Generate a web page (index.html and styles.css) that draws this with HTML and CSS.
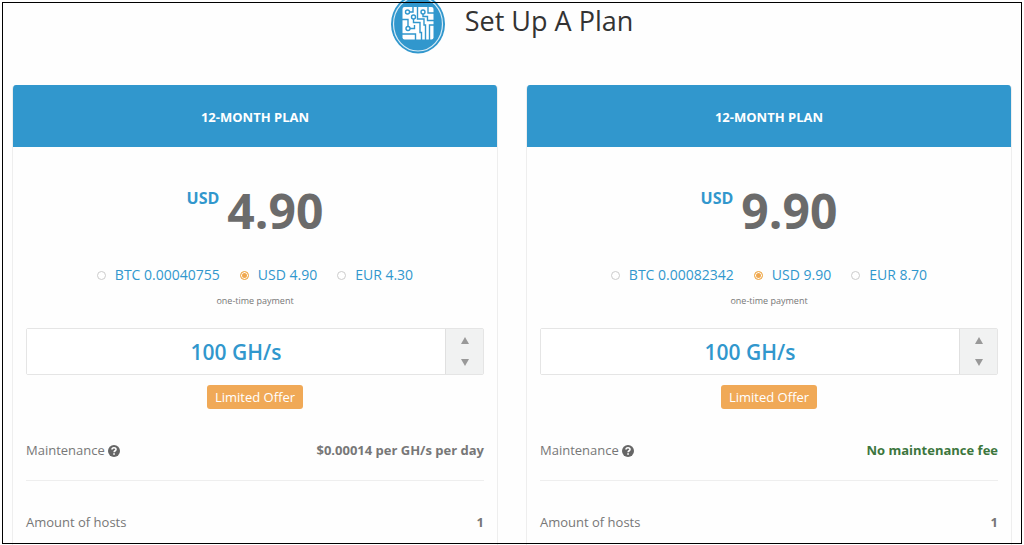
FILE: index.html
```html
<!DOCTYPE html>
<html lang="en">
<head>
  <meta charset="utf-8">
  <meta name="viewport" content="width=device-width, initial-scale=1">
  <title>Set Up A Plan</title>
  <link rel="stylesheet" href="styles.css">
</head>
<body>
  <header class="page-header">
    <svg class="logo" viewBox="0 0 54 54" aria-hidden="true">
      <ellipse cx="27" cy="24" rx="27" ry="29.500" fill="#3197cd"/>
      <ellipse cx="27" cy="24" rx="24.500" ry="27" fill="none" stroke="#d6ebf6" stroke-width="1.2"/>
      <rect x="11.500" y="7" width="31" height="32.500" rx="2" fill="#fff"/>
      <g fill="none" stroke="#3197cd" stroke-width="1.400">
        <circle cx="16.500" cy="12" r="2"/>
        <circle cx="22.500" cy="17" r="2"/>
        <circle cx="32" cy="12" r="2"/>
        <circle cx="17" cy="28.500" r="2"/>
        <path d="M18.500 12H22V7M17 26.500V19.500H11M22.500 19V22.500H29V32.500H30.500V40M19 28.500H23.500V25M11 34H24.500V40M26.500 7V19H33V25H34.500V40M32 14V16.500H36.500V20.500H43M37 7V13H43M38.500 40V25H43"/>
      </g>
    </svg>
    <h1>Set Up A Plan</h1>
  </header>

  <main class="plans">
    <form class="plan">
      <h2 class="plan-title">12-MONTH PLAN</h2>
      <div class="plan-body">
        <div class="price"><span class="currency">USD</span><span class="amount">4.90</span></div>
        <div class="currencies">
          <label class="option"><input type="radio" name="currency1">BTC 0.00040755</label>
          <label class="option"><input type="radio" name="currency1" checked>USD 4.90</label>
          <label class="option"><input type="radio" name="currency1">EUR 4.30</label>
        </div>
        <div class="note">one-time payment</div>
        <div class="spinner">
          <input type="text" class="spinner-input" value="100 GH/s" aria-label="Hash rate">
          <div class="spinner-buttons">
            <button type="button" class="spinner-btn up" aria-label="Increase"></button>
            <button type="button" class="spinner-btn down" aria-label="Decrease"></button>
          </div>
        </div>
        <div class="badge">Limited Offer</div>
        <div class="detail">
          <span class="detail-label">Maintenance
            <svg class="help" viewBox="0 0 12 12" aria-hidden="true">
              <circle cx="6" cy="6" r="6" fill="#666"/>
              <path d="M4 4.600C4 2.200 8 2.200 8 4.500C8 5.800 6.100 5.700 6.100 7.200" fill="none" stroke="#fff" stroke-width="1.600"/>
              <path d="M5.200 8.200h1.700v1.600H5.200z" fill="#fff"/>
            </svg>
          </span>
          <span class="detail-value">$0.00014 per GH/s per day</span>
        </div>
        <div class="detail">
          <span class="detail-label">Amount of hosts</span>
          <span class="detail-value">1</span>
        </div>
      </div>
    </form>

    <form class="plan">
      <h2 class="plan-title">12-MONTH PLAN</h2>
      <div class="plan-body">
        <div class="price"><span class="currency">USD</span><span class="amount">9.90</span></div>
        <div class="currencies">
          <label class="option"><input type="radio" name="currency2">BTC 0.00082342</label>
          <label class="option"><input type="radio" name="currency2" checked>USD 9.90</label>
          <label class="option"><input type="radio" name="currency2">EUR 8.70</label>
        </div>
        <div class="note">one-time payment</div>
        <div class="spinner">
          <input type="text" class="spinner-input" value="100 GH/s" aria-label="Hash rate">
          <div class="spinner-buttons">
            <button type="button" class="spinner-btn up" aria-label="Increase"></button>
            <button type="button" class="spinner-btn down" aria-label="Decrease"></button>
          </div>
        </div>
        <div class="badge">Limited Offer</div>
        <div class="detail">
          <span class="detail-label">Maintenance
            <svg class="help" viewBox="0 0 12 12" aria-hidden="true">
              <circle cx="6" cy="6" r="6" fill="#666"/>
              <path d="M4 4.600C4 2.200 8 2.200 8 4.500C8 5.800 6.100 5.700 6.100 7.200" fill="none" stroke="#fff" stroke-width="1.600"/>
              <path d="M5.200 8.200h1.700v1.600H5.200z" fill="#fff"/>
            </svg>
          </span>
          <span class="detail-value free">No maintenance fee</span>
        </div>
        <div class="detail">
          <span class="detail-label">Amount of hosts</span>
          <span class="detail-value">1</span>
        </div>
      </div>
    </form>
  </main>
</body>
</html>
```

FILE: styles.css
```css
* {
  box-sizing: border-box;
}

body {
  display: flex;
  flex-direction: column;
  min-height: 100vh;
  margin: 0;
  font-family: "Open Sans", "Noto Sans", sans-serif;
  font-size: 13px;
  line-height: 20px;
  color: #777;
  background: #fefefe;
}

/* thin frame over the whole page */
body::after {
  content: "";
  position: fixed;
  inset: 2px 2px 1px 2px;
  border: 1px solid #000;
  pointer-events: none;
}

.page-header {
  display: flex;
  align-items: flex-start;
  justify-content: center;
  gap: 20px;
  padding-bottom: 31px;
}

.logo {
  width: 54px;
  height: 54px;
}

h1 {
  margin: 0;
  font-size: 27px;
  font-weight: 400;
  line-height: 42px;
  color: #333;
}

.plans {
  flex: 1;
  display: grid;
  grid-template-columns: 1fr 1fr;
  gap: 28px;
  padding: 0 12px;
}

.plan {
  border: 1px solid #eee;
  border-top: 0;
  border-bottom: 0;
  border-radius: 4px 4px 0 0;
  overflow: hidden;
}

.plan-title {
  margin: 0;
  padding: 22px 0 20px;
  background: #3197cd;
  color: #fff;
  font-size: 13px;
  font-weight: 700;
  line-height: 20px;
  text-align: center;
}

.plan-body {
  padding: 32px 13px 0;
}

.price {
  display: flex;
  justify-content: center;
  align-items: flex-start;
  gap: 8px;
}

.currency {
  padding-top: 8px;
  font-size: 16px;
  font-weight: 700;
  line-height: 22px;
  color: #3197cd;
}

.amount {
  font-size: 48px;
  font-weight: 700;
  line-height: 64px;
  color: #6b6b6b;
}

.currencies {
  display: flex;
  justify-content: center;
  gap: 20px;
  margin-top: 22px;
}

.option {
  display: flex;
  align-items: center;
  gap: 9px;
  font-size: 14px;
  color: #3197cd;
  cursor: pointer;
}

.option input {
  appearance: none;
  width: 9px;
  height: 9px;
  margin: 0;
  border: 1px solid #ccc;
  border-radius: 50%;
  background: #fff;
}

.option input:checked {
  border-color: #f0ad4e;
  background: #f0a850;
  box-shadow: inset 0 0 0 1px #fff;
}

.note {
  margin-top: 8px;
  font-size: 9px;
  line-height: 16px;
  text-align: center;
}

.spinner {
  display: flex;
  height: 47px;
  margin-top: 19px;
  border: 1px solid #e5e5e5;
  border-radius: 2px;
}

.spinner-input {
  flex: 1;
  min-width: 0;
  padding: 0;
  border: 0;
  background: #fff;
  font-family: inherit;
  font-size: 21px;
  font-weight: 600;
  text-align: center;
  color: #3197cd;
}

.spinner-buttons {
  display: flex;
  flex-direction: column;
  width: 38px;
  border-left: 1px solid #e0e0e0;
  background: #f1f2f2;
}

.spinner-btn {
  flex: 1;
  display: flex;
  align-items: center;
  justify-content: center;
  padding: 0;
  border: 0;
  background: none;
  cursor: pointer;
}

.spinner-btn::before {
  content: "";
  border: 4px solid transparent;
}

.spinner-btn.up::before {
  border-top: 0;
  border-bottom: 7px solid #999;
}

.spinner-btn.down::before {
  border-bottom: 0;
  border-top: 7px solid #999;
}

.badge {
  width: fit-content;
  margin: 10px auto 0;
  padding: 2px 8px;
  border-radius: 3px;
  background: #f0a957;
  color: #fff;
}

.detail {
  display: flex;
  justify-content: space-between;
  padding: 31px 0 20px;
  border-bottom: 1px solid #eee;
}

.detail:last-child {
  border-bottom: 0;
  padding-bottom: 0;
}

.help {
  width: 12px;
  height: 12px;
  vertical-align: -2px;
}

.detail-value {
  font-weight: 700;
}

.detail-value.free {
  color: #3c763d;
}
```
